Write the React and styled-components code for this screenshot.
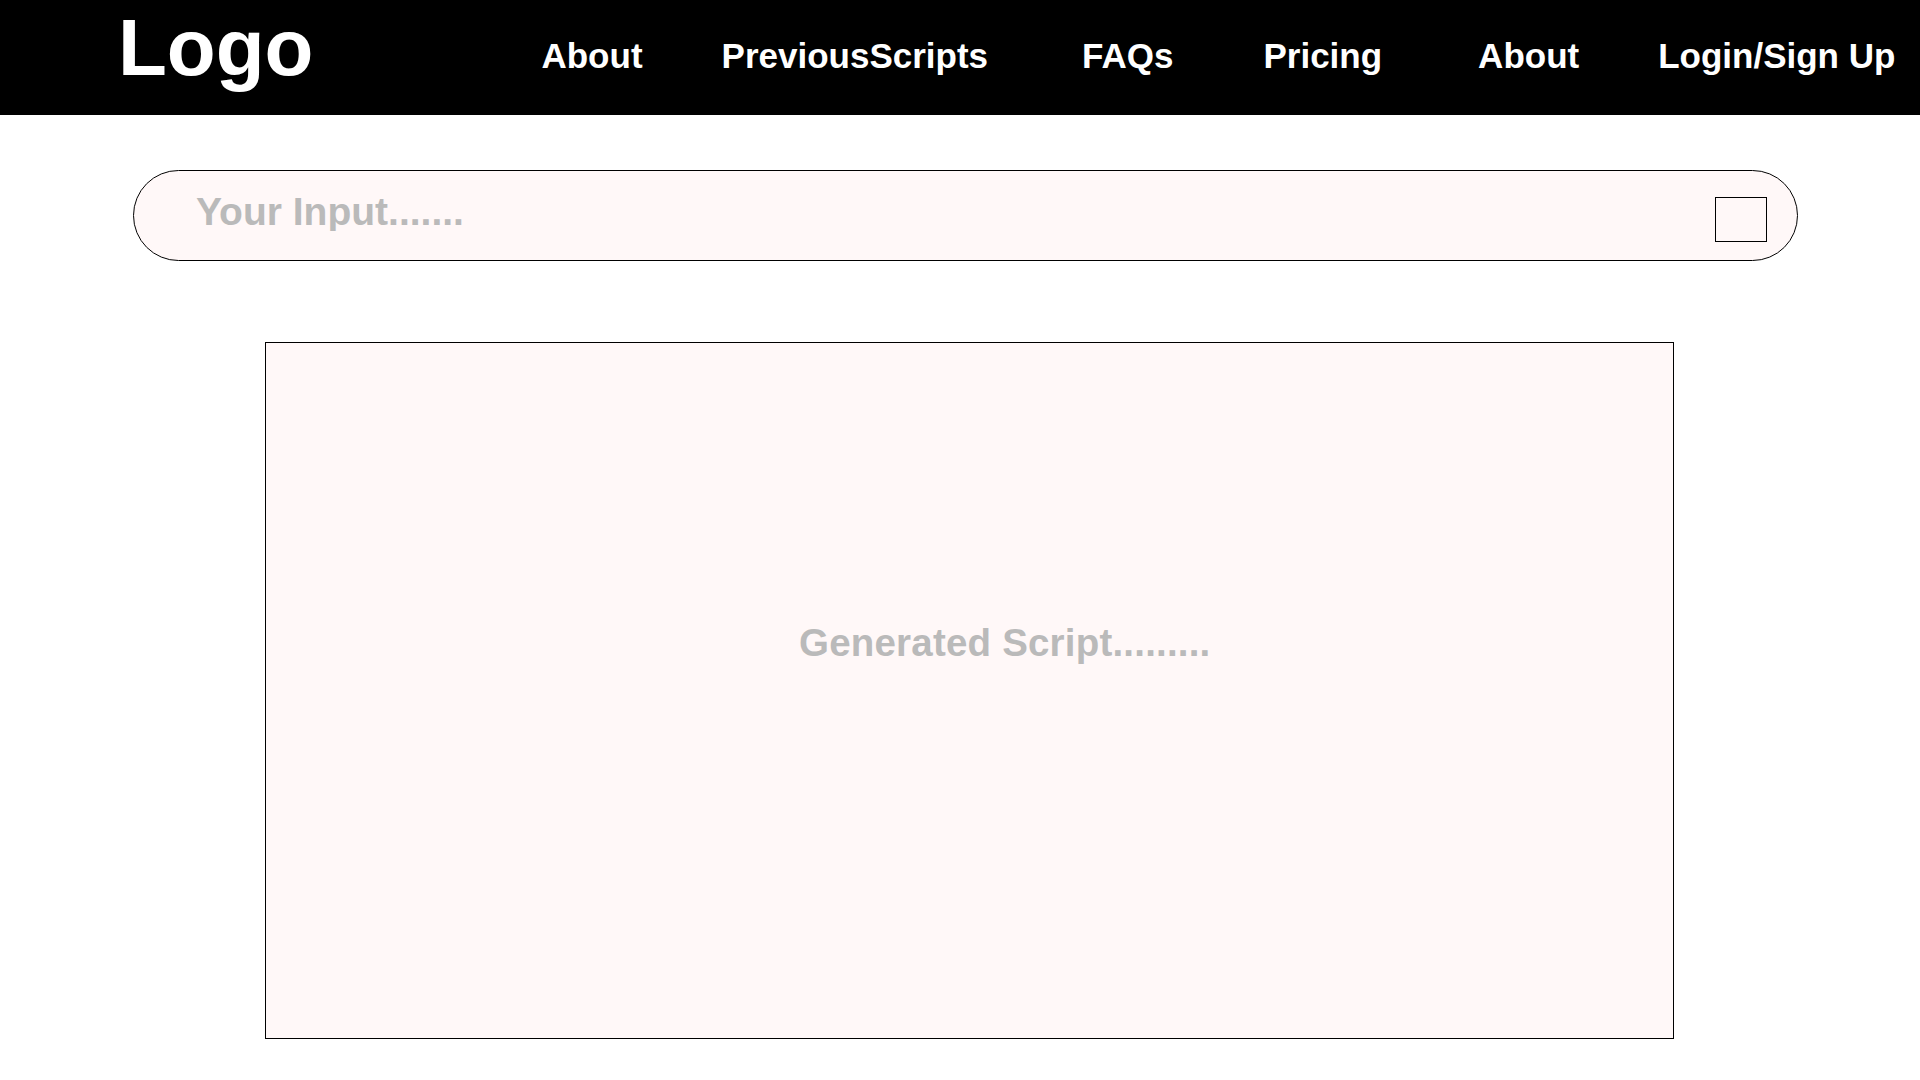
import React from "react";
import styled, { createGlobalStyle } from "styled-components";

const GlobalStyle = createGlobalStyle`
  html, body {
    margin: 0;
    padding: 0;
    background: #ffffff;
    font-family: "Liberation Sans", Arial, sans-serif;
  }
  * { box-sizing: border-box; }
`;

const Page = styled.div`
  display: flex;
  flex-direction: column;
  min-height: 1080px;
`;

const Header = styled.header`
  display: flex;
  align-items: flex-start;
  height: 115px;
  padding-left: 118px;
  background: #000000;
`;

const Logo = styled.div`
  margin-top: 8px;
  font-size: 80px;
  line-height: 1;
  font-weight: 700;
  color: #ffffff;
`;

const Nav = styled.nav`
  display: flex;
  align-items: flex-start;
  margin-top: 38px;
  margin-left: 228px;
`;

const NavLink = styled.a`
  margin-left: ${(p) => p.$offset || 0}px;
  font-size: 35px;
  line-height: 1;
  font-weight: 700;
  color: #ffffff;
  text-decoration: none;
  white-space: nowrap;
  cursor: pointer;
`;

const Main = styled.main`
  display: flex;
  flex-direction: column;
  align-items: flex-start;
`;

const SearchBar = styled.form`
  display: flex;
  align-items: flex-start;
  width: 1665px;
  height: 91px;
  margin: 55px 0 0 133px;
  padding: 21px 30px 0 62px;
  border: 1px solid #000000;
  border-radius: 46px;
  background: #fff8f8;
`;

const SearchInput = styled.input`
  flex: 1;
  height: 39px;
  padding: 0;
  border: none;
  outline: none;
  background: transparent;
  font-family: "Liberation Sans", Arial, sans-serif;
  font-size: 39px;
  line-height: 1;
  font-weight: 700;
  color: #333333;

  &::placeholder {
    color: #bababa;
    opacity: 1;
  }
`;

const SubmitBox = styled.button`
  flex: none;
  width: 52px;
  height: 45px;
  margin-top: 5px;
  padding: 0;
  border: 1px solid #000000;
  background: transparent;
  cursor: pointer;
`;

const ScriptPanel = styled.section`
  width: 1409px;
  height: 697px;
  margin: 81px 0 0 265px;
  padding: 281px 0 0 533px;
  border: 1px solid #000000;
  background: #fff8f8;
`;

const ScriptPlaceholder = styled.div`
  font-size: 38.5px;
  line-height: 1;
  letter-spacing: 0.2px;
  font-weight: 700;
  color: #bababa;
  white-space: nowrap;
`;

const navItems = [
  { label: "About", offset: 0 },
  { label: "PreviousScripts", offset: 79 },
  { label: "FAQs", offset: 94 },
  { label: "Pricing", offset: 90 },
  { label: "About", offset: 96 },
  { label: "Login/Sign Up", offset: 79 },
];

export default function App() {
  return (
    <Page>
      <GlobalStyle />
      <Header>
        <Logo>Logo</Logo>
        <Nav>
          {navItems.map((item, i) => (
            <NavLink key={i} $offset={item.offset}>
              {item.label}
            </NavLink>
          ))}
        </Nav>
      </Header>
      <Main>
        <SearchBar onSubmit={(e) => e.preventDefault()}>
          <SearchInput placeholder="Your Input......." />
          <SubmitBox type="submit" aria-label="Submit" />
        </SearchBar>
        <ScriptPanel>
          <ScriptPlaceholder>Generated Script.........</ScriptPlaceholder>
        </ScriptPanel>
      </Main>
    </Page>
  );
}
